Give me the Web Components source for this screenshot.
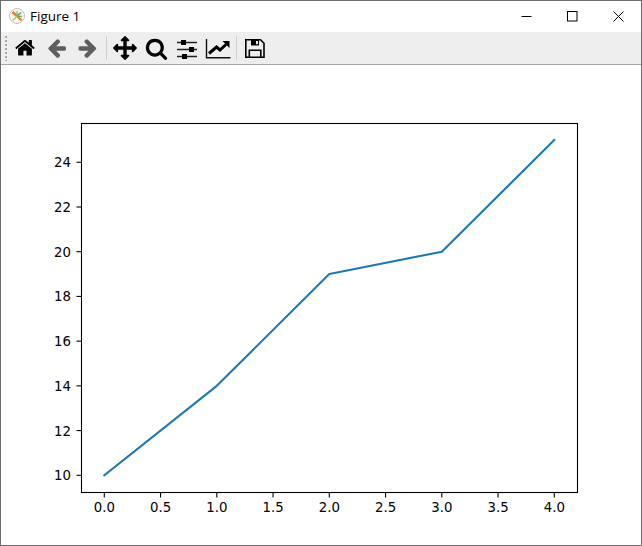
<!DOCTYPE html>
<html>
<head>
<meta charset="utf-8">
<title>Figure 1</title>
<style>
  html, body { margin: 0; padding: 0; background: #fff; }
</style>
</head>
<body>
<fig-window>
  <fig-titlebar slot="title">Figure 1</fig-titlebar>
  <fig-toolbar slot="toolbar">
    <tool-btn icon="home"></tool-btn>
    <tool-btn icon="back"></tool-btn>
    <tool-btn icon="forward"></tool-btn>
    <tool-sep></tool-sep>
    <tool-btn icon="move"></tool-btn>
    <tool-btn icon="zoom"></tool-btn>
    <tool-btn icon="sliders"></tool-btn>
    <tool-btn icon="chart"></tool-btn>
    <tool-sep></tool-sep>
    <tool-btn icon="save"></tool-btn>
  </fig-toolbar>
  <fig-plot></fig-plot>
</fig-window>

<script>
// Window frame: 1px grey border, title, toolbar and the canvas below
class FigWindow extends HTMLElement {
  constructor() {
    super();
    this.attachShadow({ mode: 'open' });
    this.shadowRoot.innerHTML = `
    <style>
      :host {
        display: flex;
        flex-direction: column;
        box-sizing: border-box;
        width: 642px;
        height: 546px;
        border: 1px solid #6e6e6e;
        background: #fff;
        overflow: hidden;
      }
    </style>
    <slot name="title"></slot>
    <slot name="toolbar"></slot>
    <slot></slot>`;
  }
}

class FigTitlebar extends HTMLElement {
  constructor() {
    super();
    this.attachShadow({ mode: 'open' });
    this.shadowRoot.innerHTML = `
    <style>
      :host {
        display: flex;
        align-items: center;
        height: 31px;
        flex: none;
        background: #fff;
        font: 13.500px "Open Sans", "Noto Sans", sans-serif;
        color: #000;
      }
      .logo { margin: 0 5px 2px 8px; flex: none; }
      .name { flex: 1; padding-bottom: 1px; }
      .ctl { width: 46px; height: 31px; display: flex; align-items: center; justify-content: center; flex: none; }
    </style>
    <svg class="logo" width="16" height="16" viewBox="0 0 16 16">
      <circle cx="8" cy="8" r="7.500" fill="#f6f6f6" stroke="#c4c4c4" stroke-width="1"/>
      <path d="M8 8L3.500 4" stroke="#e8842c" stroke-width="2.800"/>
      <path d="M8 8L12.500 12.500" stroke="#e8842c" stroke-width="2.400"/>
      <path d="M8 8L4 12.500" stroke="#d9c13c" stroke-width="1.600"/>
      <path d="M8 8L12 4.500" stroke="#5aa84a" stroke-width="1.600"/>
      <path d="M8 8L8 3" stroke="#7fa9c4" stroke-width="1.200"/>
      <path d="M8 8L13 8.500" stroke="#6fb05a" stroke-width="1.400"/>
    </svg>
    <span class="name"><slot></slot></span>
    <span class="ctl"><svg width="11" height="11" viewBox="0 0 11 11"><path d="M0.500 5.500H10.500" stroke="#000" fill="none"/></svg></span>
    <span class="ctl"><svg width="11" height="11" viewBox="0 0 11 11"><rect x="0.500" y="0.500" width="9.500" height="9.500" stroke="#000" fill="none"/></svg></span>
    <span class="ctl"><svg width="11" height="11" viewBox="0 0 11 11"><path d="M0.500 0.500L10.500 10.500M10.500 0.500L0.500 10.500" stroke="#000" fill="none"/></svg></span>`;
  }
}

class FigToolbar extends HTMLElement {
  constructor() {
    super();
    this.attachShadow({ mode: 'open' });
    this.shadowRoot.innerHTML = `
    <style>
      :host {
        display: flex;
        align-items: center;
        flex: none;
        height: 32px;
        background: #eeeeee;
        border-bottom: 1px solid #a9a9a9;
      }
      .grip {
        flex: none;
        width: 2px;
        height: 25px;
        margin: 0 3.500px 0 4px;
        background: repeating-linear-gradient(#a8a8a8 0 2px, transparent 2px 4px);
      }
    </style>
    <span class="grip"></span>
    <slot></slot>`;
  }
}

// Los iconos del toolbar, dibujados a mano o de FontAwesome
const ICONOS = {
  home: `<svg width="21.500" height="21.500" viewBox="0 0 1792 1792"><path fill="#000" d="M1408 992v480q0 26-19 45t-45 19h-384v-384h-256v384h-384q-26 0-45-19t-19-45v-480q0-1 .5-3t.5-3l575-474 575 474q1 2 1 6zm223-69l-62 74q-8 9-21 11h-3q-13 0-21-7l-692-577-692 577q-12 8-24 7-13-2-21-11l-62-74q-8-10-7-23.500t11-21.500l719-599q32-26 76-26t76 26l244 204v-195q0-14 9-23t23-9h192q14 0 23 9t9 23v408l219 182q10 8 11 21.500t-7 23.500z"/></svg>`,
  back: `<svg width="21.500" height="21.500" viewBox="0 0 1792 1792"><path fill="#5f5f5f" d="M1664 896v128q0 53-32.500 90.500t-84.500 37.500h-704l293 294q38 36 38 90t-38 90l-75 76q-37 37-90 37-52 0-91-37l-651-652q-37-37-37-90 0-52 37-91l651-650q38-38 91-38 52 0 90 38l75 74q38 38 38 91t-38 91l-293 293h704q52 0 84.500 37.500t32.500 90.500z"/></svg>`,
  forward: `<svg width="21.500" height="21.500" viewBox="0 0 1792 1792"><path fill="#5f5f5f" d="M1600 960q0 54-37 91l-651 651q-39 37-91 37-51 0-90-37l-75-75q-38-38-38-91t38-91l293-293h-704q-52 0-84.500-37.500t-32.500-90.500v-128q0-53 32.500-90.500t84.500-37.500h704l-293-294q-38-36-38-90t38-90l75-75q38-38 90-38 53 0 91 38l651 651q37 35 37 90z"/></svg>`,
  move: `<svg width="24" height="24" viewBox="0 0 1792 1792"><path fill="#000" d="M1792 896q0 26-19 45l-256 256q-19 19-45 19t-45-19-19-45v-128h-384v384h128q26 0 45 19t19 45-19 45l-256 256q-19 19-45 19t-45-19l-256-256q-19-19-19-45t19-45 45-19h128v-384h-384v128q0 26-19 45t-45 19-45-19l-256-256q-19-19-19-45t19-45l256-256q19-19 45-19t45 19 19 45v128h384v-384h-128q-26 0-45-19t-19-45 19-45l256-256q19-19 45-19t45 19l256 256q19 19 19 45t-19 45-45 19h-128v384h384v-128q0-26 19-45t45-19 45 19l256 256q19 19 19 45z"/></svg>`,
  zoom: `<svg width="23" height="23" viewBox="0 0 1792 1792"><path fill="#000" d="M1216 832q0-185-131.500-316.500t-316.500-131.500-316.500 131.500-131.500 316.500 131.500 316.500 316.500 131.500 316.500-131.500 131.500-316.500zm512 832q0 52-38 90t-90 38q-54 0-90-38l-343-342q-179 124-399 124-143 0-273.500-55.500t-225-150-150-225-55.500-273.500 55.500-273.500 150-225 225-150 273.500-55.500 273.500 55.500 225 150 150 225 55.500 273.500q0 220-124 399l343 343q37 37 37 90z"/></svg>`,
  sliders: `<svg width="22" height="22" viewBox="0 0 22 22">
    <path d="M1 5.500H21M1 12.500H21M1 19.500H21" stroke="#222" stroke-width="1.300" fill="none"/>
    <rect x="5" y="3" width="5" height="5" fill="#000"/>
    <rect x="13" y="10" width="5" height="5" fill="#000"/>
    <rect x="6" y="17" width="5" height="5" fill="#000"/>
  </svg>`,
  chart: `<svg width="26" height="22" viewBox="0 0 26 22">
    <path d="M1.500 2V20.700H25.500" stroke="#111" stroke-width="1.400" fill="none"/>
    <path d="M4 16.500L11.500 10L15 13L21 7.500" stroke="#000" stroke-width="3" fill="none"/>
    <path d="M17.500 4H24.500V11Z" fill="#000"/>
  </svg>`,
  save: `<svg width="22" height="22" viewBox="0 0 22 22">
    <path d="M1.800 2.800H16.500L20 6.300V20.200H1.800Z" stroke="#000" stroke-width="1.600" fill="none"/>
    <path d="M5.300 20.200V13.300H16.800V20.200" stroke="#000" stroke-width="1.600" fill="none"/>
    <path d="M7 2.800H15V8.500H7Z" fill="#000"/>
    <rect x="12" y="4" width="2" height="3.200" fill="#eeeeee"/>
  </svg>`
};

class ToolBtn extends HTMLElement {
  constructor() {
    super();
    this.attachShadow({ mode: 'open' });
  }
  connectedCallback() {
    this.shadowRoot.innerHTML = `
    <style>
      :host {
        display: flex;
        align-items: center;
        justify-content: center;
        flex: none;
        width: 31px;
        height: 32px;
      }
    </style>
    ${ICONOS[this.getAttribute('icon')]}`;
  }
}

class ToolSep extends HTMLElement {
  constructor() {
    super();
    this.attachShadow({ mode: 'open' });
    this.shadowRoot.innerHTML = `
    <style>
      :host { display: flex; justify-content: center; flex: none; width: 6px; height: 24px; }
      i { display: block; width: 1px; background: #d0d0d0; }
    </style>
    <i></i>`;
  }
}

// The matplotlib figure: axes, ticks and the one line
class FigPlot extends HTMLElement {
  constructor() {
    super();
    this.attachShadow({ mode: 'open' });
  }
  connectedCallback() {
    // offsets of the canvas inside the window: the border and the two bars
    const ox = 1, oy = 65;
    const px = v => 104.3 + 112.5 * v - ox;
    const py = v => 475.3 - 22.36 * (v - 10) - oy;
    const L = 81.5 - ox, R = 577.5 - ox, T = 123.5 - oy, B = 492.5 - oy;

    let ticks = '';
    for (const v of [0, 0.5, 1, 1.5, 2, 2.5, 3, 3.5, 4]) {
      const x = px(v);
      ticks += `<path d="M${x} ${B}v5" stroke="#000" stroke-width="1.100"/>`;
      ticks += `<text x="${x}" y="${B + 19.500}" text-anchor="middle">${v.toFixed(1)}</text>`;
    }
    for (let v = 10; v <= 24; v += 2) {
      const y = py(v);
      ticks += `<path d="M${L} ${y}h-5" stroke="#000" stroke-width="1.100"/>`;
      ticks += `<text x="${L - 10.500}" y="${y + 5}" text-anchor="end">${v}</text>`;
    }
    const datos = [[0, 10], [1, 14], [2, 19], [3, 20], [4, 25]];
    const linea = datos.map(([a, b]) => `${px(a)},${py(b)}`).join(' ');

    this.shadowRoot.innerHTML = `
    <style>
      :host { display: block; flex: 1; background: #fff; }
      svg { display: block; }
      text { font: 13.300px "DejaVu Sans", sans-serif; fill: #000; }
    </style>
    <svg width="640" height="480" viewBox="0 0 640 480">
      <polyline points="${linea}" fill="none" stroke="#1f77b4" stroke-width="2.100" stroke-linejoin="round" stroke-linecap="square"/>
      <rect x="${L}" y="${T}" width="${R - L}" height="${B - T}" fill="none" stroke="#000" stroke-width="1.100"/>
      ${ticks}
    </svg>`;
  }
}

customElements.define('fig-window', FigWindow);
customElements.define('fig-titlebar', FigTitlebar);
customElements.define('fig-toolbar', FigToolbar);
customElements.define('tool-btn', ToolBtn);
customElements.define('tool-sep', ToolSep);
customElements.define('fig-plot', FigPlot);
</script>
</body>
</html>
